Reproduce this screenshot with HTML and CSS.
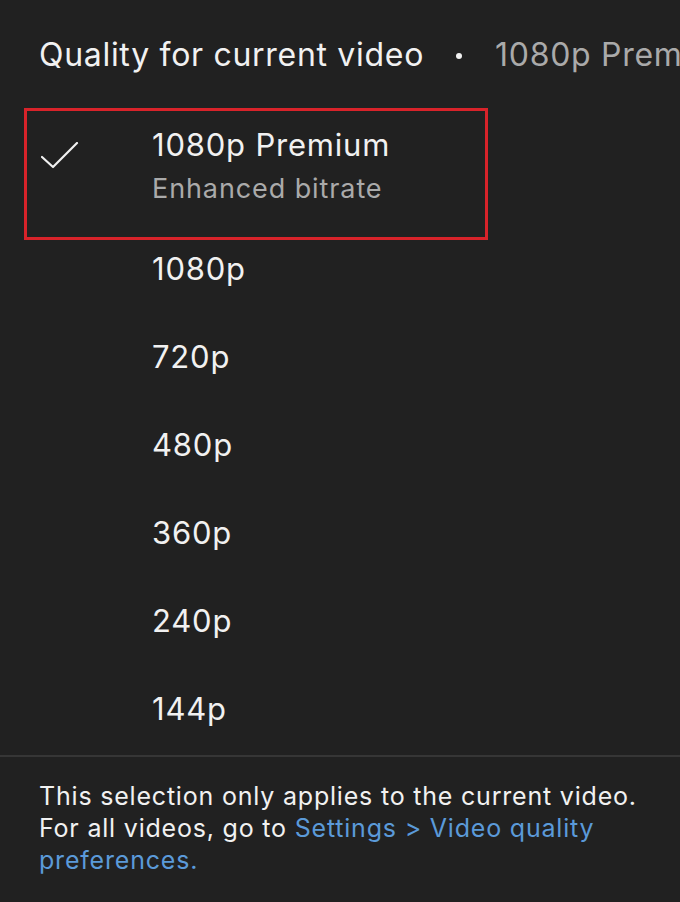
FILE: index.html
```html
<!DOCTYPE html>
<html lang="en">
<head>
  <meta charset="UTF-8">
  <title>Quality for current video</title>
  <meta name="viewport" content="width=device-width, initial-scale=1.0">
  <link rel="stylesheet" href="styles.css">
</head>
<body>
  <div class="header">
    <span class="title">Quality for current video</span>
    <span class="dot"></span>
    <span class="current">1080p Premium</span>
  </div>

  <div class="selected">
    <svg class="check" width="40" height="32" viewBox="0 0 40 32">
      <polyline points="1,15 12,25 36,1" fill="none" stroke="#f1f1f1" stroke-width="2.2" stroke-linecap="round" stroke-linejoin="round"/>
    </svg>
    <div class="label">
      <div class="name">1080p Premium</div>
      <div class="sub">Enhanced bitrate</div>
    </div>
  </div>

  <ul class="options">
    <li>1080p</li>
    <li>720p</li>
    <li>480p</li>
    <li>360p</li>
    <li>240p</li>
    <li>144p</li>
  </ul>

  <div class="footer">
    This selection only applies to the current video.<br>
    For all videos, go to <a href="#">Settings &gt; Video quality preferences.</a>
  </div>
</body>
</html>
```

FILE: styles.css
```css
body {
  margin: 0;
  background: #212121;
  color: #f1f1f1;
  font-family: Inter, "Noto Sans", sans-serif;
  overflow: hidden;
}
.header {
  height: 108px;
  padding-left: 39px;
  display: flex;
  align-items: center;
  white-space: nowrap;
  overflow: hidden;
  font-size: 32px;
  letter-spacing: 0.7px;
}
.dot {
  width: 6px;
  height: 6px;
  border-radius: 50%;
  background: #f1f1f1;
  margin: 4px 33px 0 32px;
  flex-shrink: 0;
}
.current {
  color: #aaaaaa;
}
.selected {
  margin-left: 24px;
  width: 458px;
  height: 126px;
  border: 3px solid #d8232a;
  display: flex;
  align-items: flex-start;
}
.check {
  margin: 31px 0 0 14px;
}
.label {
  margin: 15px 0 0 71px;
}
.name {
  font-size: 31px;
  line-height: 38px;
  letter-spacing: 0.8px;
}
.sub {
  font-size: 27px;
  line-height: 50px;
  letter-spacing: 0.9px;
  color: #aaaaaa;
}
.options {
  list-style: none;
  margin: 0;
  padding: 0;
  border-bottom: 2px solid #363636;
}
.options li {
  padding: 11px 0 41px 152px;
  font-size: 31px;
  line-height: 36px;
  letter-spacing: 0.8px;
}
.options li:last-child {
  padding-bottom: 28px;
}
.footer {
  padding: 23px 39px;
  font-size: 25px;
  line-height: 32px;
  letter-spacing: 0.8px;
}
.footer a {
  color: #5b9ad9;
  text-decoration: none;
}
```
